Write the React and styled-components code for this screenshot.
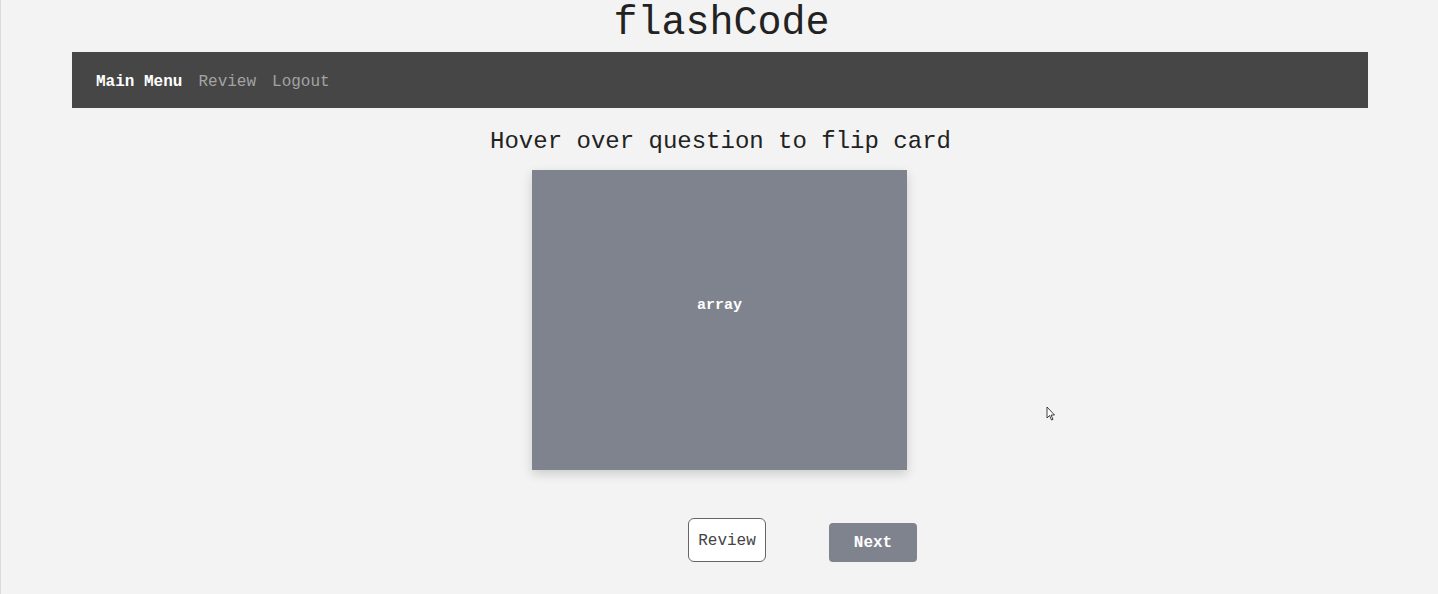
import React from "react"
import styled, { createGlobalStyle } from "styled-components"

const GlobalStyle = createGlobalStyle`
  html, body {
    margin: 0;
    padding: 0;
    background-color: #f3f3f3;
  }
  body {
    font-family: "Liberation Mono", "Courier New", monospace;
    color: #222;
  }
`

const Page = styled.div`
  position: relative;
  width: 100%;
  min-height: 594px;
  box-sizing: border-box;
  border-left: 1px solid #dcdcdc;
  display: flex;
  flex-direction: column;
  align-items: center;
`

const Title = styled.h1`
  margin: 0 0 6px;
  padding-top: 2px;
  font-size: 40px;
  line-height: 44px;
  font-weight: 400;
  color: #222;
  transform: translateX(2px);
`

const NavBar = styled.nav`
  align-self: stretch;
  margin: 0 70px 0 71px;
  height: 56px;
  padding: 3px 0 0 24px;
  box-sizing: border-box;
  background-color: #464646;
  display: flex;
  align-items: center;
  gap: 16px;
`

const NavLink = styled.a`
  font-size: 16px;
  font-weight: ${p => (p.$active ? 700 : 400)};
  color: ${p => (p.$active ? "#fff" : "#a3a3a3")};
  text-decoration: none;
  cursor: pointer;
`

const Heading = styled.h2`
  margin: 0 0 13px;
  padding-top: 19px;
  font-size: 24px;
  line-height: 30px;
  font-weight: 400;
  color: #222;
  transform: translateX(1px);
`

const Card = styled.div`
  width: 375px;
  height: 300px;
  background-color: #7f838d;
  box-shadow: 0 4px 10px rgba(0, 0, 0, 0.16);
  display: flex;
  align-items: center;
  justify-content: center;
  padding-bottom: 30px;
  box-sizing: border-box;
  color: #fff;
  font-size: 15px;
  font-weight: 700;
`

const ButtonRow = styled.div`
  margin-top: 48px;
  padding-left: 166px;
  display: flex;
  align-items: flex-end;
  gap: 63px;
`

const OutlineButton = styled.button`
  width: 78px;
  height: 44px;
  padding-top: 2px;
  background: #fff;
  border: 1px solid #666;
  border-radius: 6px;
  font-family: "Liberation Mono", "Courier New", monospace;
  font-size: 16px;
  color: #444;
  cursor: pointer;
`

const SolidButton = styled.button`
  width: 88px;
  height: 39px;
  padding-top: 2px;
  background: #7f838d;
  border: none;
  border-radius: 4px;
  font-family: "Liberation Mono", "Courier New", monospace;
  font-size: 16px;
  font-weight: 700;
  color: #fff;
  cursor: pointer;
`

const Pointer = styled.svg`
  position: absolute;
  left: 1045px;
  top: 406px;
`

export default function App() {
  return (
    <Page>
      <GlobalStyle />
      <Title>flashCode</Title>
      <NavBar>
        <NavLink $active>Main Menu</NavLink>
        <NavLink>Review</NavLink>
        <NavLink>Logout</NavLink>
      </NavBar>
      <Heading>Hover over question to flip card</Heading>
      <Card>array</Card>
      <ButtonRow>
        <OutlineButton>Review</OutlineButton>
        <SolidButton>Next</SolidButton>
      </ButtonRow>
      <Pointer width="10" height="16" viewBox="0 0 10 16">
        <path d="M1 1 L1 12 L3.5 9.5 L5.5 14 L7 13.3 L5 9 L8.5 9 Z" fill="#fff" stroke="#111" strokeWidth="0.8" />
      </Pointer>
    </Page>
  )
}
